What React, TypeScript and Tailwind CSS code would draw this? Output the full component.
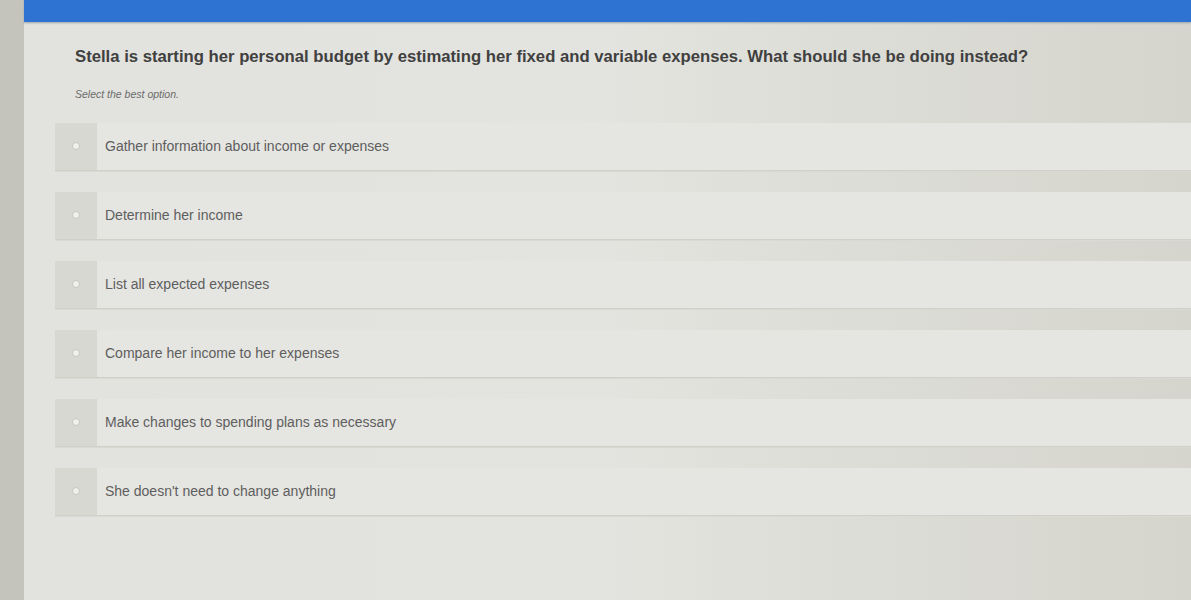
import React from "react";

const options = [
  "Gather information about income or expenses",
  "Determine her income",
  "List all expected expenses",
  "Compare her income to her expenses",
  "Make changes to spending plans as necessary",
  "She doesn't need to change anything",
];

function OptionRow({ label }: { label: string }) {
  return (
    <label className="flex h-[48px] cursor-pointer items-stretch border-b border-[#d0d0c9] bg-[#e5e5e1] shadow-[0_1px_0_#dadad4]">
      <span className="flex w-[42px] shrink-0 items-center justify-center bg-[#d8d8d3]">
        <span className="h-[8px] w-[8px] rounded-full border border-[#c6c6c0] bg-[#f0f0ec]" />
      </span>
      <span className="flex items-center pl-[8px] text-[14px] text-[#5e5e5e]">{label}</span>
    </label>
  );
}

export default function App() {
  return (
    <div
      className="flex h-[600px] w-full overflow-hidden bg-[#cbcbc4]"
      style={{ fontFamily: "Arial, 'Liberation Sans', sans-serif" }}
    >
      <div className="w-[24px] shrink-0 bg-[#c4c4bd]" />
      <main className="flex flex-1 flex-col bg-gradient-to-r from-[#e2e2de] via-[#e3e3df] to-[#d5d5cd]">
        <header className="h-[22px] shrink-0 bg-[#2e72d2] shadow-[0_1px_2px_#9aa4b0]" />
        <section className="pl-[51px] pt-[25px]">
          <h1 className="text-[16.7px] font-bold leading-[20px] text-[#404040]">
            Stella is starting her personal budget by estimating her fixed and variable expenses. What should she be doing instead?
          </h1>
          <p className="mt-[20px] text-[10.5px] italic text-[#6c6c6c]">Select the best option.</p>
        </section>
        <div className="ml-[31px] mt-[20px] flex flex-col gap-[21px]">
          {options.map((o) => (
            <OptionRow key={o} label={o} />
          ))}
        </div>
      </main>
    </div>
  );
}
